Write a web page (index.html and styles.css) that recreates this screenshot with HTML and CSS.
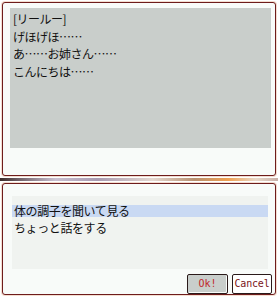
FILE: index.html
```html
<!DOCTYPE html>
<html lang="ja">
<head>
    <meta charset="UTF-8">
    <title>会話</title>
    <link rel="stylesheet" href="styles.css">
</head>
<body>
    <div class="window">
        <!-- メッセージ -->
        <div class="panel message-panel">
            <div class="message-box">
                <div class="line">[リールー]</div>
                <div class="line">げほげほ……</div>
                <div class="line">あ……お姉さん……</div>
                <div class="line">こんにちは……</div>
            </div>
        </div>

        <div class="divider"></div>

        <!-- 選択肢 -->
        <div class="panel choice-panel">
            <div class="choice-list">
                <div class="choice selected">体の調子を聞いて見る</div>
                <div class="choice">ちょっと話をする</div>
            </div>
            <div class="buttons">
                <div class="btn btn-ok">Ok!</div>
                <div class="btn btn-cancel">Cancel</div>
            </div>
        </div>
    </div>
</body>
</html>
```

FILE: styles.css
```css
* {
    margin: 0;
    padding: 0;
    box-sizing: border-box;
}

body {
    width: 278px;
    height: 296px;
    background: #ffffff;
    font-family: "Noto Sans CJK JP", "DejaVu Sans", sans-serif;
    font-size: 12px;
    color: #111;
    overflow: hidden;
}

.window {
    padding: 2px 2px 0 2px;
    display: flex;
    flex-direction: column;
    height: 296px;
}

.panel {
    background: #f8fbf9;
    border: 1px solid #6e1c1c;
    border-radius: 3px;
    box-shadow: 0 0 0 1px #f3ddd0;
}

.message-panel {
    height: 174px;
    padding: 5px 4px 0 7px;
}

.message-box {
    background: #c9cecb;
    height: 140px;
    padding: 2px 0 0 3px;
}

.line {
    height: 17.5px;
    line-height: 17.5px;
    letter-spacing: -0.5px;
}

.divider {
    height: 3px;
    margin: 2px 0 2px -2px;
    width: 278px;
    background: linear-gradient(90deg, #3a2a28 0%, #6a5a60 6%, #c9c0d0 20%, #a89ab0 35%, #e4d8d0 55%, #b89070 70%, #f0a050 82%, #e8d8c8 92%, #c8b0a8 100%);
}

.choice-panel {
    flex: 1;
    margin-bottom: 1px;
    padding: 12px 7px 0 9px;
    display: flex;
    flex-direction: column;
}

.choice-list {
    background: #f0f3f0;
    height: 73px;
    padding-top: 9px;
}

.choice {
    height: 12px;
    line-height: 12px;
    padding-left: 2px;
    margin-bottom: 5px;
    letter-spacing: -0.4px;
}

.choice.selected {
    background: #c9d9f3;
}

.buttons {
    display: flex;
    justify-content: flex-end;
    gap: 4px;
    margin-top: 5px;
    margin-right: -4px;
}

.btn {
    height: 20px;
    line-height: 18px;
    border: 1px solid #2a1a1a;
    border-radius: 2px;
    font-family: "DejaVu Sans Mono", monospace;
    font-size: 10px;
    text-align: center;
    white-space: nowrap;
}

.btn-ok {
    width: 41px;
    background: #c9cecb;
    color: #c0282c;
    box-shadow: inset -1px -1px 0 #f8fbf9;
}

.btn-cancel {
    width: 40px;
    background: #ffffff;
    color: #7a1418;
    letter-spacing: -0.2px;
}
```
